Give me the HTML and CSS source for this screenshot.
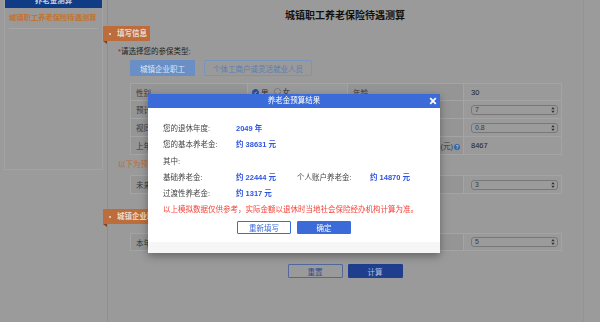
FILE: index.html
```html
<!DOCTYPE html>
<html lang="zh-CN">
<head>
    <meta charset="UTF-8">
    <meta name="viewport" content="width=device-width, initial-scale=1.0">
    <title>城镇职工养老保险待遇测算</title>
    <link rel="stylesheet" href="styles.css">
</head>
<body>

    <!-- page content, drawn in its dimmed colours while the result dialog is open -->
    <div class="page">
        <aside class="sidebar">
            <div class="side-head">养老金测算</div>
            <div class="side-item">城镇职工养老保险待遇测算</div>
        </aside>

        <main class="main">
            <h1 class="title">城镇职工养老保险待遇测算</h1>

            <div class="tag">填写信息</div>
            <p class="type-label"><span class="req">*</span>请选择您的参保类型:</p>
            <div class="type-btns">
                <button class="type-btn active">城镇企业职工</button>
                <button class="type-btn wide">个体工商户或灵活就业人员</button>
            </div>

            <table class="form-table">
                <colgroup>
                    <col style="width:117px">
                    <col style="width:100px">
                    <col style="width:116px">
                    <col style="width:98px">
                </colgroup>
                <tr class="r17">
                    <td class="label">性别</td>
                    <td class="radios">
                        <label class="radio checked"><i><svg viewBox="0 0 8 8"><path d="M2 4.2l1.4 1.4L6.2 2.6" fill="none" stroke="#e6e6e6" stroke-width="1.2"/></svg></i>男</label>
                        <label class="radio"><i></i>女</label>
                    </td>
                    <td class="label">年龄</td>
                    <td class="value">30</td>
                </tr>
                <tr>
                    <td class="label" colspan="3">预计个人缴费年限(年)</td>
                    <td class="value">
                        <span class="select"><select><option>7</option></select><svg class="arrow" viewBox="0 0 4 7"><path d="M2 0L4 2.6H0zM2 7L0 4.4h4z" fill="#333"/></svg></span>
                    </td>
                </tr>
                <tr>
                    <td class="label" colspan="3">视同缴费指数</td>
                    <td class="value">
                        <span class="select"><select><option>0.8</option></select><svg class="arrow" viewBox="0 0 4 7"><path d="M2 0L4 2.6H0zM2 7L0 4.4h4z" fill="#333"/></svg></span>
                    </td>
                </tr>
                <tr>
                    <td class="label" colspan="3">
                        <div class="split">
                            <span>上年度全省在岗职工月平均工资</span>
                            <span>(元)<i class="help">?</i></span>
                        </div>
                    </td>
                    <td class="value">8467</td>
                </tr>
            </table>

            <p class="hint">以下为预测参数，可根据实际情况修改</p>

            <table class="form-table table-mid">
                <colgroup>
                    <col style="width:333px">
                    <col style="width:98px">
                </colgroup>
                <tr>
                    <td class="label">未来年度缴费工资增长率(%)</td>
                    <td class="value">
                        <span class="select"><select><option>3</option></select><svg class="arrow" viewBox="0 0 4 7"><path d="M2 0L4 2.6H0zM2 7L0 4.4h4z" fill="#333"/></svg></span>
                    </td>
                </tr>
            </table>

            <div class="tag tag-wide">城镇企业职工缴费情况</div>

            <table class="form-table table-last">
                <colgroup>
                    <col style="width:333px">
                    <col style="width:98px">
                </colgroup>
                <tr class="r17">
                    <td class="label">本年度个人账户记账利率(%)</td>
                    <td class="value">
                        <span class="select"><select><option>5</option></select><svg class="arrow" viewBox="0 0 4 7"><path d="M2 0L4 2.6H0zM2 7L0 4.4h4z" fill="#333"/></svg></span>
                    </td>
                </tr>
            </table>

            <div class="actions">
                <button class="btn btn-reset">重置</button>
                <button class="btn btn-calc">计算</button>
            </div>
        </main>
    </div>

    <!-- result dialog -->
    <div class="dialog">
        <div class="dialog-head">
            养老金预算结果
            <svg class="dialog-close" viewBox="0 0 8 8"><path d="M1.2 1.2l5.6 5.6M6.8 1.2L1.2 6.8" stroke="#fff" stroke-width="1.8"/></svg>
        </div>
        <div class="dialog-body">
            <div class="row"><span class="k">您的退休年度:</span><span class="v">2049 年</span></div>
            <div class="row"><span class="k">您的基本养老金:</span><span class="v">约 38631 元</span></div>
            <div class="row"><span class="k">其中:</span></div>
            <div class="row">
                <span class="k">基础养老金:</span><span class="v v-short">约 22444 元</span>
                <span class="k">个人账户养老金:</span><span class="v">约 14870 元</span>
            </div>
            <div class="row"><span class="k">过渡性养老金:</span><span class="v">约 1317 元</span></div>
            <p class="warn">以上模拟数据仅供参考，实际金额以退休时当地社会保险经办机构计算为准。</p>
            <div class="dialog-btns">
                <button class="dbtn dbtn-line">重新填写</button>
                <button class="dbtn dbtn-fill">确定</button>
            </div>
        </div>
        <div class="dialog-foot"></div>
    </div>

</body>
</html>
```

FILE: styles.css
```css
* {
    box-sizing: border-box;
}

body {
    margin: 0;
    background-color: #9b9b9b;
    font-family: "Liberation Sans", "Noto Sans CJK SC", sans-serif;
    font-size: 7.5px;
    color: #2e2e2e;
    overflow: hidden;
}

button {
    font-family: inherit;
    font-size: 7.5px;
    cursor: pointer;
}

/* visible part of the page (scrolled down a little); colours are the dimmed ones */
.page {
    display: flex;
    align-items: flex-start;
    height: 322px;
    overflow: hidden;
    background-color: #9b9b9b;
}

.sidebar {
    flex: 0 0 99px;
    height: 178px;
    margin: -8px 0 0 4px;
    border: 1px solid #a3a3a3;
    background-color: #9a9a9a;
}

.side-head {
    height: 15px;
    line-height: 15px;
    background-color: #0f3c84;
    color: #c8d0e0;
    text-align: center;
    font-weight: bold;
}

.side-item {
    margin: 0 4px;
    height: 21px;
    line-height: 20px;
    font-size: 7.3px;
    white-space: nowrap;
    color: #c2742f;
    font-weight: bold;
    border-bottom: 1px solid #a5a5a5;
}

.main {
    flex: 0 0 477px;
    height: 340px;
    margin: -8px 0 0 4px;
    padding: 0 10px 0 9px;
    border-left: 1px solid #8f8f8f;
    border-right: 1px solid #939393;
    background-color: #9a9a9a;
}

.title {
    margin: 14px 0 0;
    font-size: 10px;
    line-height: 20px;
    text-align: center;
    color: #111;
}

.tag {
    position: relative;
    width: 47px;
    height: 15px;
    line-height: 15px;
    margin-left: -14px;
    padding-left: 6px;
    background-color: #bd6c3b;
    color: #e8dcd2;
    font-weight: bold;
}

.tag::before {
    content: "";
    display: inline-block;
    width: 2px;
    height: 2px;
    margin-right: 6px;
    border-radius: 50%;
    background-color: #e8dcd2;
    vertical-align: middle;
}

.tag::after {
    content: "";
    position: absolute;
    left: 0;
    top: 100%;
    border-left: 4px solid transparent;
    border-top: 3px solid #7d4422;
}

.tag-wide {
    width: auto;
    display: inline-block;
    padding-right: 10px;
    margin-top: 15px;
}

.type-label {
    margin: 5px 0 0;
    padding-left: 1px;
    line-height: 12px;
    color: #222;
}

.req {
    color: #a02020;
}

.type-btns {
    display: flex;
    gap: 9px;
    margin: 2px 0 0 13px;
}

.type-btn {
    width: 65px;
    height: 16px;
    padding: 0;
    border: 1px solid #7894c0;
    border-radius: 1px;
    background-color: transparent;
    color: #5a7cb4;
}

.type-btn.wide {
    width: 108px;
}

.type-btn.active {
    background-color: #6a8fc6;
    border-color: #6a8fc6;
    color: #dfe6f2;
}

.form-table {
    margin: 7px 0 0 13px;
    width: 431px;
    table-layout: fixed;
    border-collapse: collapse;
}

.form-table.table-mid {
    margin-top: 4px;
}

.form-table.table-last {
    margin-top: 9px;
}

.form-table tr {
    height: 18px;
}

.form-table tr.r17 {
    height: 17px;
}

.form-table td {
    padding: 0 5px;
    border: 1px solid #a4a4a4;
    font-size: 7.5px;
}

.form-table .label {
    background-color: #959595;
    color: #383838;
}

.form-table .value {
    padding-left: 7px;
    color: #222;
}

.form-table .radios {
    padding-left: 4px;
}

.radio {
    display: inline-flex;
    align-items: center;
    margin-right: 3px;
    color: #333;
}

.radio i {
    display: inline-flex;
    width: 7px;
    height: 7px;
    margin-right: 2px;
    border: 1px solid #7a7a7a;
    border-radius: 50%;
    background-color: #9e9e9e;
}

.radio.checked i {
    border-color: #23509c;
    background-color: #23509c;
}

.radio i svg {
    width: 100%;
    height: 100%;
}

.split {
    display: flex;
    justify-content: space-between;
    margin-right: -2px;
}

.help {
    display: inline-block;
    width: 6px;
    height: 6px;
    margin-left: 1px;
    border-radius: 50%;
    background-color: #2e67a6;
    color: #ccc;
    font-size: 5px;
    font-style: normal;
    font-weight: bold;
    line-height: 6px;
    text-align: center;
}

.select {
    position: relative;
    display: block;
    width: 87px;
    height: 10px;
}

.select select {
    appearance: none;
    width: 100%;
    height: 100%;
    padding: 0 3px;
    border: 1px solid #787878;
    border-radius: 3px;
    background-color: #9b9b9b;
    font-family: inherit;
    font-size: 7px;
    line-height: 8px;
    color: #3a3a3a;
}

.select .arrow {
    position: absolute;
    right: 3px;
    top: 2px;
    width: 4px;
    height: 6px;
}

.hint {
    margin: 4px 0 0 1px;
    line-height: 12px;
    color: #bb6a34;
}

.actions {
    display: flex;
    justify-content: center;
    gap: 5px;
    margin-top: 13px;
}

.btn {
    width: 55px;
    height: 14px;
    padding: 0;
    border-radius: 1px;
}

.btn-reset {
    border: 1px solid #5468a0;
    background-color: transparent;
    color: #34498a;
}

.btn-calc {
    border: 1px solid #1f3f8e;
    background-color: #1f3f8e;
    color: #b4c0dc;
}

/* Result dialog */
.dialog {
    position: fixed;
    z-index: 10;
    left: 148px;
    top: 94px;
    width: 292px;
    background-color: #fff;
    box-shadow: 0 3px 8px rgba(0, 0, 0, 0.35);
}

.dialog-head {
    position: relative;
    height: 14px;
    line-height: 14px;
    background-color: #3a6bd8;
    color: #fff;
    text-align: center;
}

.dialog-close {
    position: absolute;
    right: 3px;
    top: 3px;
    width: 8px;
    height: 8px;
}

.dialog-body {
    padding: 13px 15px 0;
}

.row {
    display: flex;
    height: 16.25px;
    line-height: 16.25px;
}

.row .k {
    width: 73px;
    color: #444;
}

.row .v {
    color: #2f55e0;
    font-weight: bold;
}

.row .v-short {
    width: 61px;
}

.warn {
    margin: 0;
    line-height: 16px;
    color: #f2443a;
}

.dialog-btns {
    display: flex;
    justify-content: center;
    gap: 6px;
    margin-top: 3px;
}

.dbtn {
    width: 54px;
    height: 13px;
    padding: 0;
    border: 1px solid #3a6bd8;
    border-radius: 1px;
}

.dbtn-line {
    background-color: #fff;
    color: #3a6bd8;
}

.dbtn-fill {
    background-color: #3a6bd8;
    color: #fff;
}

.dialog-foot {
    height: 11px;
    margin-top: 8px;
    background-color: #f6f6f6;
}
```
